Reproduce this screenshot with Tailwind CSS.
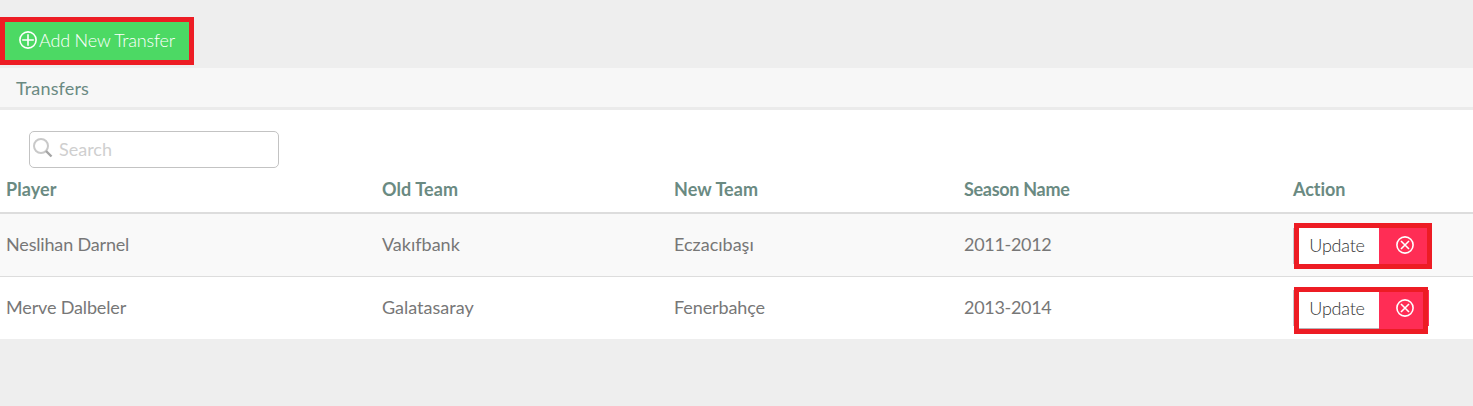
<!DOCTYPE html>
<html lang="en">
<head>
<meta charset="utf-8">
<title>Transfers</title>
<script src="https://cdn.jsdelivr.net/npm/@tailwindcss/browser@4"></script>
</head>
<body class="h-[406px] overflow-hidden bg-[#eeeeee] pt-[17px] font-['Lato',sans-serif] text-[18px] leading-[26px] text-[#777777] [font-variant-ligatures:none]">
  <button class="flex h-12 w-[194px] items-center border-5 border-[#ed1c24] bg-[#4cd964] pl-[14px] font-light text-white">
    <svg class="mr-[2px] mb-[2px] size-[18px] shrink-0" viewBox="0 0 18 18" fill="none" stroke="currentColor" stroke-width="1.6"><circle cx="9" cy="9" r="8.1"/><path d="M9 3.2v11.6M3.2 9h11.6"/></svg>
    <span class="pb-[2px] tracking-[-0.18px] whitespace-nowrap">Add New Transfer</span>
  </button>
  <section class="mt-[3px] h-[271px] bg-white">
    <header class="flex h-[42px] items-center border-b-3 border-[#ebebeb] bg-[#f7f7f7] pl-4 tracking-[0.15px] text-[#6a8a82]">Transfers</header>
    <div class="h-[58px] pt-[21px] pl-[29px]">
      <div class="flex h-[37px] w-[250px] items-center rounded-[5px] border border-[#c3c3c3] pl-[3px] text-[#cfcfcf]">
        <svg class="mr-[6px] mb-[3px] size-5" viewBox="0 0 20 20" fill="none"><circle cx="8" cy="8" r="7" stroke="#c9c9c9" stroke-width="2"/><path d="M13 13l5.5 5.5" stroke="#a5a5a5" stroke-width="2.4"/></svg>
        <span class="pb-[2px]">Search</span>
      </div>
    </div>
    <div class="grid h-[46px] grid-cols-[376px_292px_290px_329px_1fr] items-start border-b-2 border-[#dddddd] pt-[8px] pl-[6px] font-bold text-[#6a8a82]">
      <div class="tracking-[0.1px]">Player</div><div class="tracking-[0.1px]">Old Team</div><div class="tracking-[0.1px]">New Team</div><div class="tracking-[-0.3px]">Season Name</div><div class="tracking-[-0.05px]">Action</div>
    </div>
    <div class="grid h-[63px] grid-cols-[376px_292px_290px_329px_1fr] items-start border-b border-[#dddddd] bg-[#f9f9f9] pl-[6px]">
      <div class="pt-[17px] tracking-[-0.17px]">Neslihan Darnel</div><div class="pt-[17px]">Vakıfbank</div><div class="pt-[17px]">Eczacıbaşı</div><div class="pt-[17px] tracking-[-0.3px]">2011-2012</div>
      <div class="mt-[9px] flex items-center">
        <div class="h-9 w-px bg-[#c7c7cc]"></div>
        <div class="flex h-[46px] w-[138px] border-5 border-[#ed1c24] font-light">
          <button class="w-20 bg-white pr-1 pb-[2px] tracking-[-0.25px] text-[#333333]">Update</button>
          <button class="flex-1 bg-[#ff2d55] pl-[17px] text-white"><svg class="mb-[2px] size-[18px]" viewBox="0 0 18 18" fill="none" stroke="currentColor" stroke-width="1.6"><circle cx="9" cy="9" r="8.1"/><path d="M5 5l8 8M13 5l-8 8"/></svg></button>
        </div>
      </div>
    </div>
    <div class="grid h-[62px] grid-cols-[376px_292px_290px_329px_1fr] items-start pl-[6px]">
      <div class="pt-[17px] tracking-[-0.15px]">Merve Dalbeler</div><div class="pt-[17px]">Galatasaray</div><div class="pt-[17px] tracking-[-0.1px]">Fenerbahçe</div><div class="pt-[17px] tracking-[-0.3px]">2013-2014</div>
      <div class="mt-[10px] flex items-start">
        <div class="mt-[3px] h-9 w-px bg-[#c7c7cc]"></div>
        <div class="flex h-[47px] w-[134px] border-5 border-[#ed1c24] font-light">
          <button class="w-20 border-b border-[#b5b5ba] bg-white pr-1 pb-[5px] tracking-[-0.25px] text-[#333333]">Update</button>
          <button class="flex-1 bg-[#ff2d55] pl-[17px] text-white"><svg class="mb-[5px] size-[18px]" viewBox="0 0 18 18" fill="none" stroke="currentColor" stroke-width="1.6"><circle cx="9" cy="9" r="8.1"/><path d="M5 5l8 8M13 5l-8 8"/></svg></button>
        </div>
        <div class="mt-[3px] h-9 w-px bg-[#ff2d55]"></div>
      </div>
    </div>
  </section>
</body>
</html>
